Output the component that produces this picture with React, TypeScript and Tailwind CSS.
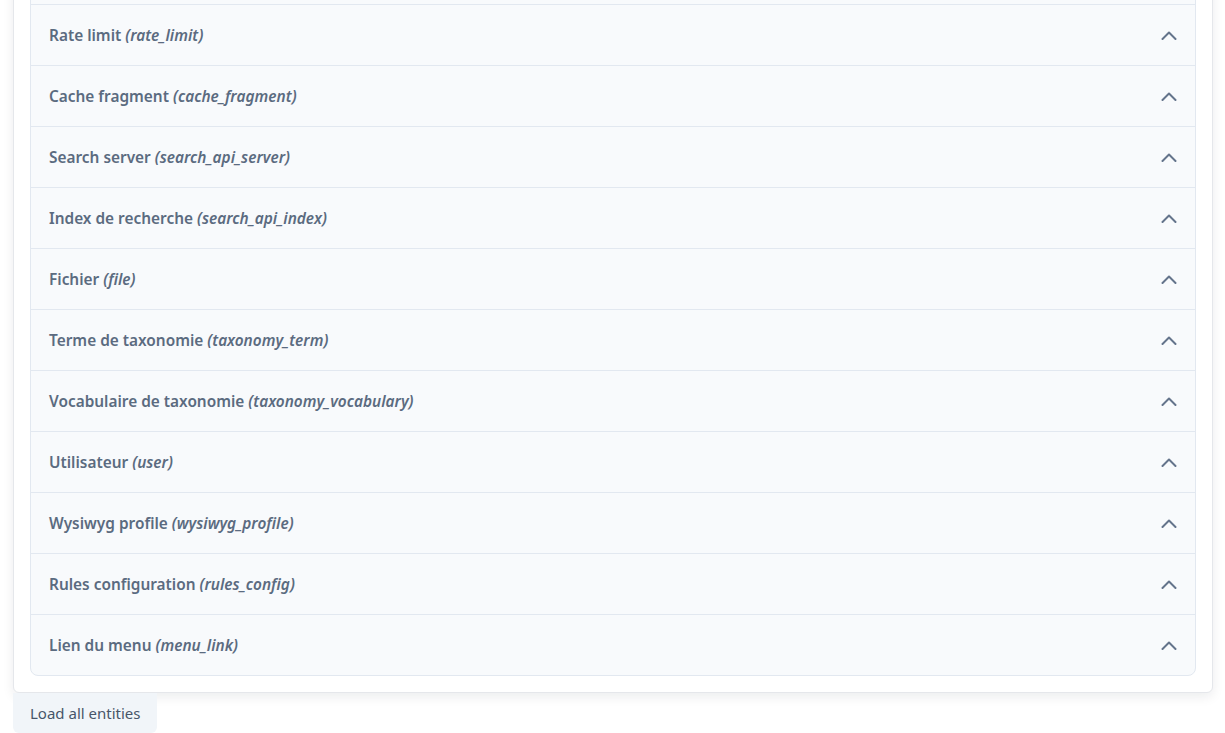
const entities: [string, string][] = [
  ['', ''],
  ['Rate limit', 'rate_limit'],
  ['Cache fragment', 'cache_fragment'],
  ['Search server', 'search_api_server'],
  ['Index de recherche', 'search_api_index'],
  ['Fichier', 'file'],
  ['Terme de taxonomie', 'taxonomy_term'],
  ['Vocabulaire de taxonomie', 'taxonomy_vocabulary'],
  ['Utilisateur', 'user'],
  ['Wysiwyg profile', 'wysiwyg_profile'],
  ['Rules configuration', 'rules_config'],
  ['Lien du menu', 'menu_link'],
];

function Chevron() {
  return (
    <svg width="16" height="9" viewBox="0 0 16 9" fill="none" className="text-[#64748b]">
      <polyline points="1.5,8 8,1.5 14.5,8" stroke="currentColor" strokeWidth="2" strokeLinecap="round" strokeLinejoin="round" />
    </svg>
  );
}

export default function App() {
  return (
    <div className="h-[733px] overflow-hidden bg-white font-['Noto_Sans',sans-serif]">
      <div className="-mt-[75px] ml-[13px] w-[1200px] rounded-b-md border border-[#e5e7eb] bg-white p-4 shadow-[0_4px_12px_rgba(15,23,42,0.08)]">
        <div className="overflow-hidden rounded-lg border border-[#e2e8f0] bg-[#f8fafc]">
          {entities.map(([label, id], i) => (
            <div
              key={i}
              className={`flex h-[61px] items-center justify-between px-[18px] ${i > 0 ? 'border-t border-[#e2e8f0]' : ''}`}
            >
              {label ? (
                <span className="pt-[2px] text-[15.4px] font-semibold text-[#5b6b80]">
                  {label} <em className="italic">({id})</em>
                </span>
              ) : (
                <span />
              )}
              <Chevron />
            </div>
          ))}
        </div>
      </div>
      <button className="ml-[13px] h-[40px] rounded-b-md bg-[#f1f5f9] px-[17px] text-[15px] text-[#475569]">
        Load all entities
      </button>
    </div>
  );
}
